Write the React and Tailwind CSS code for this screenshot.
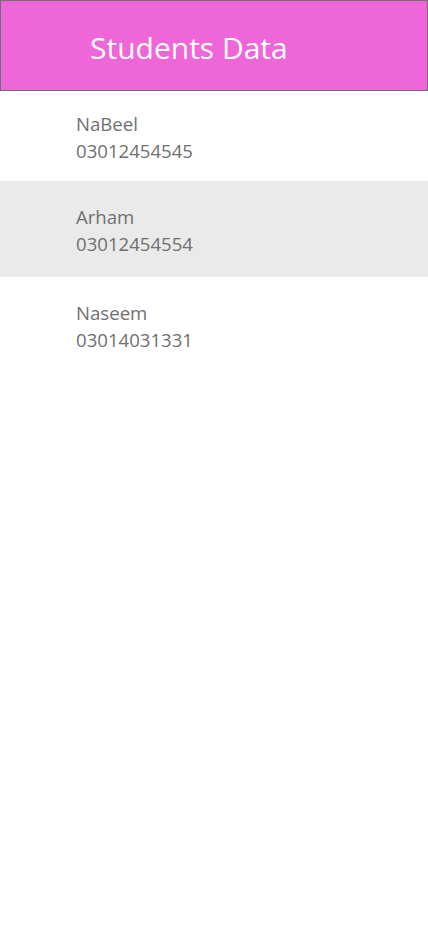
const students = [
  { name: 'NaBeel', phone: '03012454545' },
  { name: 'Arham', phone: '03012454554' },
  { name: 'Naseem', phone: '03014031331' },
]

export default function App() {
  return (
    <div className="min-h-[926px] w-full bg-white" style={{ fontFamily: '"Open Sans", "Noto Sans", sans-serif' }}>
      <header className="flex h-[91px] items-center border border-[#707070] bg-[#ef66d9] pl-[89px] pt-[4px]">
        <h1 className="text-[30px] leading-none text-white">Students Data</h1>
      </header>
      <ul>
        {students.map((s, i) => (
          <li
            key={s.phone}
            className={
              (i === 1 ? 'bg-[#eaeaea] ' : '') +
              'flex flex-col justify-center pl-[76px] pt-[2px] text-[18.6px] leading-[27px] text-[#707070] ' +
              (i === 0 ? 'h-[90px]' : 'h-[96px]')
            }
          >
            <span>{s.name}</span>
            <span>{s.phone}</span>
          </li>
        ))}
      </ul>
    </div>
  )
}
